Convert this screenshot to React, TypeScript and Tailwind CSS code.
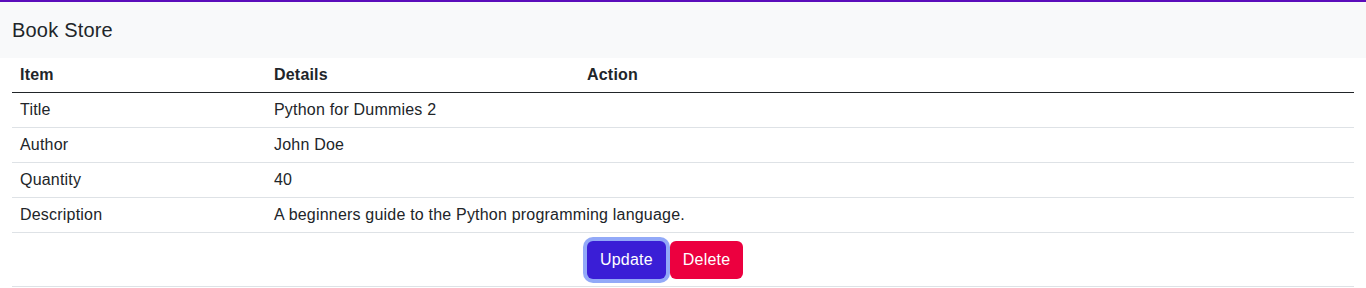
const rows: [string, string][] = [
  ['Title', 'Python for Dummies 2'],
  ['Author', 'John Doe'],
  ['Quantity', '40'],
  ['Description', 'A beginners guide to the Python programming language.'],
];

export default function App() {
  return (
    <div
      className="min-h-screen bg-white text-[16px] leading-6 tracking-[0.2px] text-[#212529]"
      style={{ fontFamily: '"Liberation Sans", Arial, sans-serif' }}
    >
      <div className="h-[2px] bg-[#5b0dbb]" />
      <header className="flex h-14 items-center bg-[#f8f9fa] px-3">
        <span className="text-[20px] leading-[30px]">Book Store</span>
      </header>

      <div className="px-3">
        <table className="w-full table-fixed border-collapse text-left">
          <colgroup>
            <col className="w-[254px]" />
            <col className="w-[313px]" />
            <col />
          </colgroup>
          <thead>
            <tr className="border-b border-[#212529]">
              <th className="h-[34px] px-2 pt-px font-bold">Item</th>
              <th className="px-2 pt-px font-bold">Details</th>
              <th className="px-2 pt-px font-bold">Action</th>
            </tr>
          </thead>
          <tbody>
            {rows.map(([label, value]) => (
              <tr key={label} className="border-b border-[#dee2e6]">
                <td className="h-[35px] px-2 pt-px">{label}</td>
                <td className="px-2 pt-px" colSpan={2}>
                  {value}
                </td>
              </tr>
            ))}
            <tr className="border-b border-[#dee2e6]">
              <td />
              <td />
              <td className="px-2 pt-2 pb-[7px]">
                <div className="flex gap-1">
                  <button className="rounded-[6px] bg-[#3a1ed6] px-[13px] py-[7px] leading-6 text-white shadow-[0_0_0_4px_rgba(110,140,245,0.75)]">
                    Update
                  </button>
                  <button className="relative rounded-[6px] bg-[#ec003f] px-[13px] py-[7px] leading-6 text-white">
                    Delete
                  </button>
                </div>
              </td>
            </tr>
          </tbody>
        </table>
      </div>
    </div>
  );
}
